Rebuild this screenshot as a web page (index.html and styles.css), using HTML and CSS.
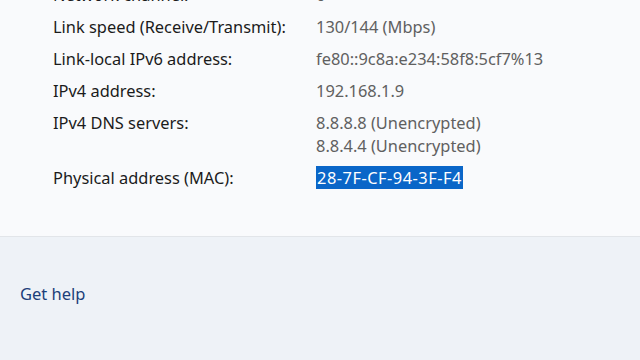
FILE: index.html
```html
<!DOCTYPE html>
<html>
<head>
<meta charset="utf-8">
<link rel="stylesheet" href="styles.css">
</head>
<body>
<div class="card">
  <div class="details">
    <div class="label">Network channel:</div><div class="value">6</div>
    <div class="label">Link speed (Receive/Transmit):</div><div class="value">130/144 (Mbps)</div>
    <div class="label">Link-local IPv6 address:</div><div class="value">fe80::9c8a:e234:58f8:5cf7%13</div>
    <div class="label">IPv4 address:</div><div class="value">192.168.1.9</div>
    <div class="label">IPv4 DNS servers:</div><div class="value">8.8.8.8 (Unencrypted)<br>8.8.4.4 (Unencrypted)</div>
    <div class="label">Physical address (MAC):</div><div class="value"><span class="sel">28-7F-CF-94-3F-F4</span></div>
  </div>
</div>
<div class="footer">
  <a class="help">Get help</a>
</div>
</body>
</html>
```
FILE: styles.css
```css
html, body {
  margin: 0;
  padding: 0;
  width: 640px;
  height: 360px;
  overflow: hidden;
  background: #eef2f7;
  font-family: "Noto Sans", "Open Sans", sans-serif;
}
.card {
  height: 237px;
  background: #f9fafc;
  border-bottom: 1px solid #e2e5e9;
  overflow: hidden;
  box-sizing: border-box;
}
.details {
  display: grid;
  grid-template-columns: 263px auto;
  row-gap: 9px;
  margin-top: -17px;
  padding-left: 53px;
  font-size: 16.4px;
  line-height: 23px;
}
.label {
  color: #1b1b1b;
}
.value {
  color: #606060;
}
.sel {
  background: #0a66c8;
  color: #ffffff;
  padding: 0 1px;
  letter-spacing: 0.5px;
}
.footer {
  padding: 45px 20px 0;
}
.help {
  font-size: 16.5px;
  line-height: 24px;
  color: #1c3f7a;
}
```
